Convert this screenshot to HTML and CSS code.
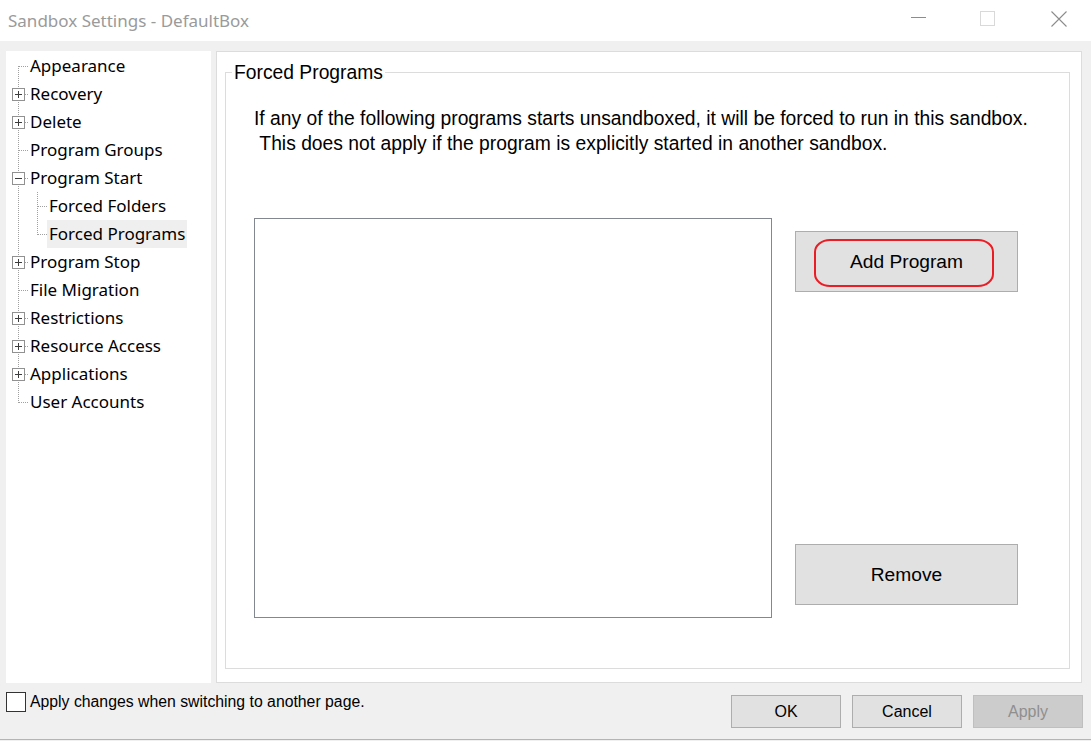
FILE: index.html
```html
<!DOCTYPE html>
<html>
<head>
<meta charset="utf-8">
<title>Sandbox Settings - DefaultBox</title>
<link rel="stylesheet" href="styles.css">
</head>
<body>
<div class="window">
  <header class="titlebar">
    <div class="title">Sandbox Settings - DefaultBox</div>
    <div class="caption-buttons">
      <span class="cap-btn cap-min"><svg width="15" height="1" viewBox="0 0 15 1"><rect width="15" height="1" fill="#8c8c8c"/></svg></span>
      <span class="cap-btn"><svg width="15" height="15" viewBox="0 0 15 15"><rect x="0.5" y="0.5" width="14" height="14" fill="none" stroke="#d9d9d9"/></svg></span>
      <span class="cap-btn cap-close"><svg width="16" height="16" viewBox="0 0 16 16"><path d="M0.5 0.5 L15.5 15.5 M15.5 0.5 L0.5 15.5" stroke="#8c8c8c" stroke-width="1.1" fill="none"/></svg></span>
    </div>
  </header>

  <div class="main">
    <nav class="tree">
      <div class="row"><span class="gutter g-first"></span><span class="label">Appearance</span></div>
      <div class="row"><span class="gutter g-mid"><svg class="exp" width="13" height="13" viewBox="0 0 13 13"><rect x="0.5" y="0.5" width="12" height="12" fill="#fff" stroke="#919191"/><path d="M3 6.5H10M6.5 3V10" stroke="#3c3c3c"/></svg></span><span class="label">Recovery</span></div>
      <div class="row"><span class="gutter g-mid"><svg class="exp" width="13" height="13" viewBox="0 0 13 13"><rect x="0.5" y="0.5" width="12" height="12" fill="#fff" stroke="#919191"/><path d="M3 6.5H10M6.5 3V10" stroke="#3c3c3c"/></svg></span><span class="label">Delete</span></div>
      <div class="row"><span class="gutter g-mid"></span><span class="label">Program Groups</span></div>
      <div class="row"><span class="gutter g-mid"><svg class="exp" width="13" height="13" viewBox="0 0 13 13"><rect x="0.5" y="0.5" width="12" height="12" fill="#fff" stroke="#919191"/><path d="M3 6.5H10" stroke="#3c3c3c"/></svg></span><span class="label">Program Start</span></div>
      <div class="row"><span class="gutter g-child"></span><span class="label">Forced Folders</span></div>
      <div class="row"><span class="gutter g-child-last"></span><span class="label sel">Forced Programs</span></div>
      <div class="row"><span class="gutter g-mid"><svg class="exp" width="13" height="13" viewBox="0 0 13 13"><rect x="0.5" y="0.5" width="12" height="12" fill="#fff" stroke="#919191"/><path d="M3 6.5H10M6.5 3V10" stroke="#3c3c3c"/></svg></span><span class="label">Program Stop</span></div>
      <div class="row"><span class="gutter g-mid"></span><span class="label">File Migration</span></div>
      <div class="row"><span class="gutter g-mid"><svg class="exp" width="13" height="13" viewBox="0 0 13 13"><rect x="0.5" y="0.5" width="12" height="12" fill="#fff" stroke="#919191"/><path d="M3 6.5H10M6.5 3V10" stroke="#3c3c3c"/></svg></span><span class="label">Restrictions</span></div>
      <div class="row"><span class="gutter g-mid"><svg class="exp" width="13" height="13" viewBox="0 0 13 13"><rect x="0.5" y="0.5" width="12" height="12" fill="#fff" stroke="#919191"/><path d="M3 6.5H10M6.5 3V10" stroke="#3c3c3c"/></svg></span><span class="label">Resource Access</span></div>
      <div class="row"><span class="gutter g-mid"><svg class="exp" width="13" height="13" viewBox="0 0 13 13"><rect x="0.5" y="0.5" width="12" height="12" fill="#fff" stroke="#919191"/><path d="M3 6.5H10M6.5 3V10" stroke="#3c3c3c"/></svg></span><span class="label">Applications</span></div>
      <div class="row"><span class="gutter g-last"></span><span class="label">User Accounts</span></div>
    </nav>

    <section class="page">
      <fieldset class="group">
        <legend class="group-title">Forced Programs</legend>
        <div class="group-body">
          <p class="desc">If any of the following programs starts unsandboxed, it will be forced to run in this sandbox.<br>&nbsp;This does not apply if the program is explicitly started in another sandbox.</p>
          <div class="list-row">
            <div class="listbox"></div>
            <div class="btn-col">
              <button class="btn big">Add Program<span class="mark"></span></button>
              <button class="btn big">Remove</button>
            </div>
          </div>
        </div>
      </fieldset>
    </section>
  </div>

  <footer class="footer">
    <label class="check"><span class="box"></span><span>Apply changes when switching to another page.</span></label>
    <div class="actions">
      <button class="btn small">OK</button>
      <button class="btn small">Cancel</button>
      <button class="btn small disabled">Apply</button>
    </div>
  </footer>
  <div class="edge"></div>
</div>
</body>
</html>
```

FILE: styles.css
```css
html, body {
  margin: 0;
  padding: 0;
}

body {
  background: #f0f0f0;
  font-family: "Liberation Sans", Arial, sans-serif;
  color: #000;
}

.window {
  width: 1091px;
  height: 741px;
  display: flex;
  flex-direction: column;
  overflow: hidden;
}

/* title bar */
.titlebar {
  flex: none;
  height: 41px;
  background: #fff;
  display: flex;
  justify-content: space-between;
}

.title {
  padding-left: 8px;
  font-family: "Noto Sans", sans-serif;
  font-size: 17px;
  line-height: 41px;
  color: #9a9a9a;
  white-space: nowrap;
}

.caption-buttons {
  display: flex;
  height: 41px;
}

.cap-btn {
  width: 69px;
  display: flex;
  justify-content: center;
  align-items: flex-start;
  padding-top: 11px;
  box-sizing: border-box;
}

.cap-btn svg {
  display: block;
}

.cap-min svg {
  margin-top: 6px;
}

.cap-close svg {
  margin-left: 4px;
}

/* main area */
.main {
  flex: none;
  height: 632px;
  display: flex;
  gap: 5px;
  padding: 10px 9px 0 6px;
}

.tree {
  width: 205px;
  flex: none;
  background: #fff;
  padding-top: 1px;
  box-sizing: border-box;
  font-family: "Noto Sans", sans-serif;
  font-size: 17px;
  line-height: 28px;
  color: #000;
}

.row {
  display: flex;
  height: 28px;
}

.gutter {
  flex: none;
  width: 22px;
  height: 28px;
  display: flex;
  align-items: flex-start;
  background-repeat: no-repeat;
}

.g-first {
  background-image:
    repeating-linear-gradient(to bottom, #a0a0a0 0 1px, transparent 1px 2px),
    repeating-linear-gradient(to right, #a0a0a0 0 1px, transparent 1px 2px);
  background-size: 1px 14px, 9px 1px;
  background-position: 12px 14px, 13px 14px;
}

.g-mid {
  background-image:
    repeating-linear-gradient(to bottom, #a0a0a0 0 1px, transparent 1px 2px),
    repeating-linear-gradient(to right, #a0a0a0 0 1px, transparent 1px 2px);
  background-size: 1px 28px, 9px 1px;
  background-position: 12px 0, 13px 14px;
}

.g-last {
  background-image:
    repeating-linear-gradient(to bottom, #a0a0a0 0 1px, transparent 1px 2px),
    repeating-linear-gradient(to right, #a0a0a0 0 1px, transparent 1px 2px);
  background-size: 1px 15px, 9px 1px;
  background-position: 12px 0, 13px 14px;
}

.g-child {
  width: 41px;
  background-image:
    repeating-linear-gradient(to bottom, #a0a0a0 0 1px, transparent 1px 2px),
    repeating-linear-gradient(to bottom, #a0a0a0 0 1px, transparent 1px 2px),
    repeating-linear-gradient(to right, #a0a0a0 0 1px, transparent 1px 2px);
  background-size: 1px 28px, 1px 28px, 9px 1px;
  background-position: 12px 0, 31px 0, 32px 14px;
}

.g-child-last {
  width: 41px;
  background-image:
    repeating-linear-gradient(to bottom, #a0a0a0 0 1px, transparent 1px 2px),
    repeating-linear-gradient(to bottom, #a0a0a0 0 1px, transparent 1px 2px),
    repeating-linear-gradient(to right, #a0a0a0 0 1px, transparent 1px 2px);
  background-size: 1px 28px, 1px 15px, 9px 1px;
  background-position: 12px 0, 31px 0, 32px 14px;
}

.exp {
  display: block;
  margin-left: 6px;
  margin-top: 8px;
}

.label {
  padding: 0 2px;
  height: 28px;
  white-space: nowrap;
}

.label.sel {
  background: #efefef;
}

/* right page */
.page {
  width: 866px;
  flex: none;
  box-sizing: border-box;
  background: #fff;
  border: 1px solid #dcdcdc;
  padding: 9px 11px 13px 8px;
  display: flex;
  flex-direction: column;
}

.group {
  flex: 1;
  margin: 0;
  padding: 0;
  min-width: 0;
  border: 1px solid #dcdcdc;
}

.group-title {
  margin-left: 6px;
  padding: 0 2px;
  font-size: 19.3px;
  line-height: 23px;
  color: #000;
}

.group-body {
  padding-left: 28px;
}

.desc {
  margin: 22px 0 0;
  font-size: 19.3px;
  line-height: 25px;
  white-space: nowrap;
}

.list-row {
  display: flex;
  gap: 23px;
  margin-top: 62px;
}

.listbox {
  width: 518px;
  height: 400px;
  box-sizing: border-box;
  border: 1px solid #828790;
  background: #fff;
}

.btn-col {
  width: 223px;
  height: 400px;
  box-sizing: border-box;
  padding: 13px 0;
  display: flex;
  flex-direction: column;
  justify-content: space-between;
}

.btn {
  box-sizing: border-box;
  background: #e1e1e1;
  border: 1px solid #adadad;
  border-radius: 0;
  font-family: "Liberation Sans", Arial, sans-serif;
  color: #000;
  padding: 0;
  margin: 0;
}

.btn.big {
  width: 223px;
  height: 61px;
  font-size: 19.2px;
  position: relative;
}

.mark {
  position: absolute;
  left: 18px;
  top: 7px;
  width: 180px;
  height: 48px;
  box-sizing: border-box;
  border: 2px solid #ec1c24;
  border-radius: 16px / 13px;
}

/* footer */
.footer {
  flex: none;
  height: 56px;
  display: flex;
  justify-content: space-between;
  align-items: flex-start;
  padding: 0 8px 0 6px;
}

.check {
  margin-top: 9px;
  display: flex;
  align-items: center;
  gap: 4px;
  font-size: 15.8px;
  color: #000;
}

.box {
  width: 20px;
  height: 20px;
  box-sizing: border-box;
  border: 1px solid #333;
  background: #fff;
}

.actions {
  margin-top: 12px;
  display: flex;
  gap: 11px;
}

.btn.small {
  width: 110px;
  height: 33px;
  font-size: 16px;
}

.btn.disabled {
  background: #cccccc;
  border-color: #bfbfbf;
  color: #8f8f8f;
}

.edge {
  flex: none;
  height: 1px;
  background: #b4b4b4;
}
```
